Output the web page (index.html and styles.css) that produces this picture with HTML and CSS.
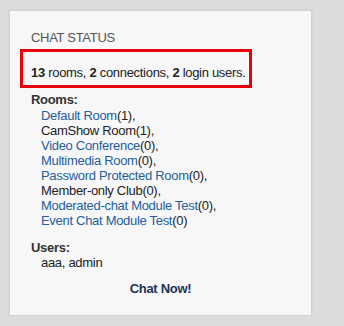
FILE: index.html
```html
<!DOCTYPE HTML>
<html>
	<head>
		<meta http-equiv="Content-Type" content="text/html; charset=UTF-8" />
		<title>Chat Status</title>
		<link rel="stylesheet" href="styles.css">
	</head>
	<body>
		<div class="status_box">
			<div class="title">CHAT STATUS</div>
			<div class="summary">
				<b>13</b> rooms, <b>2</b> connections, <b>2</b> login users.
			</div>
			<div class="label">Rooms:</div>
			<ul class="room_list">
				<li><a href="#">Default Room</a>(1),</li>
				<li>CamShow Room(1),</li>
				<li><a href="#">Video Conference</a>(0),</li>
				<li><a href="#">Multimedia Room</a>(0),</li>
				<li><a href="#">Password Protected Room</a>(0),</li>
				<li>Member-only Club(0),</li>
				<li><a href="#">Moderated-chat Module Test</a>(0),</li>
				<li><a href="#">Event Chat Module Test</a>(0)</li>
			</ul>
			<div class="label label--users">Users:</div>
			<div class="users">aaa, admin</div>
			<div class="chat_now"><a href="#">Chat Now!</a></div>
		</div>
	</body>
</html>
```

FILE: styles.css
```css
body {
	margin: 0;
	background: #dcdcdc;
	font-family: "Liberation Sans", Arial, sans-serif;
	font-size: 13px;
	line-height: 15px;
	letter-spacing: -0.3px;
	color: #222;
}
.status_box {
	box-sizing: border-box;
	width: 303px;
	height: 306px;
	margin: 10px 0 0 9px;
	padding: 19px 10px 0 10px;
	background: #f7f7f7;
	border: 1px solid #d2d2d2;
	box-shadow: 0 0 2px rgba(0, 0, 0, 0.08);
}
.title {
	padding-left: 11px;
	color: #555;
}
.summary {
	box-sizing: border-box;
	width: 232px;
	margin-top: 4px;
	padding: 13px 0 5px 8px;
	border: 3px solid #e8000b;
	white-space: nowrap;
}
.label {
	margin-top: 4px;
	margin-bottom: 1px;
	padding-left: 11px;
	font-weight: bold;
	color: #333;
}
.label--users {
	margin-top: 12px;
	margin-bottom: 0;
}
ul.room_list {
	list-style: none;
	margin: 0;
	padding: 0 0 0 21px;
}
a {
	color: #245e9c;
	text-decoration: none;
}
.users {
	padding-left: 21px;
}
.chat_now {
	margin-top: 11px;
	text-align: center;
	font-weight: bold;
}
.chat_now a {
	color: #1d3358;
}
```
